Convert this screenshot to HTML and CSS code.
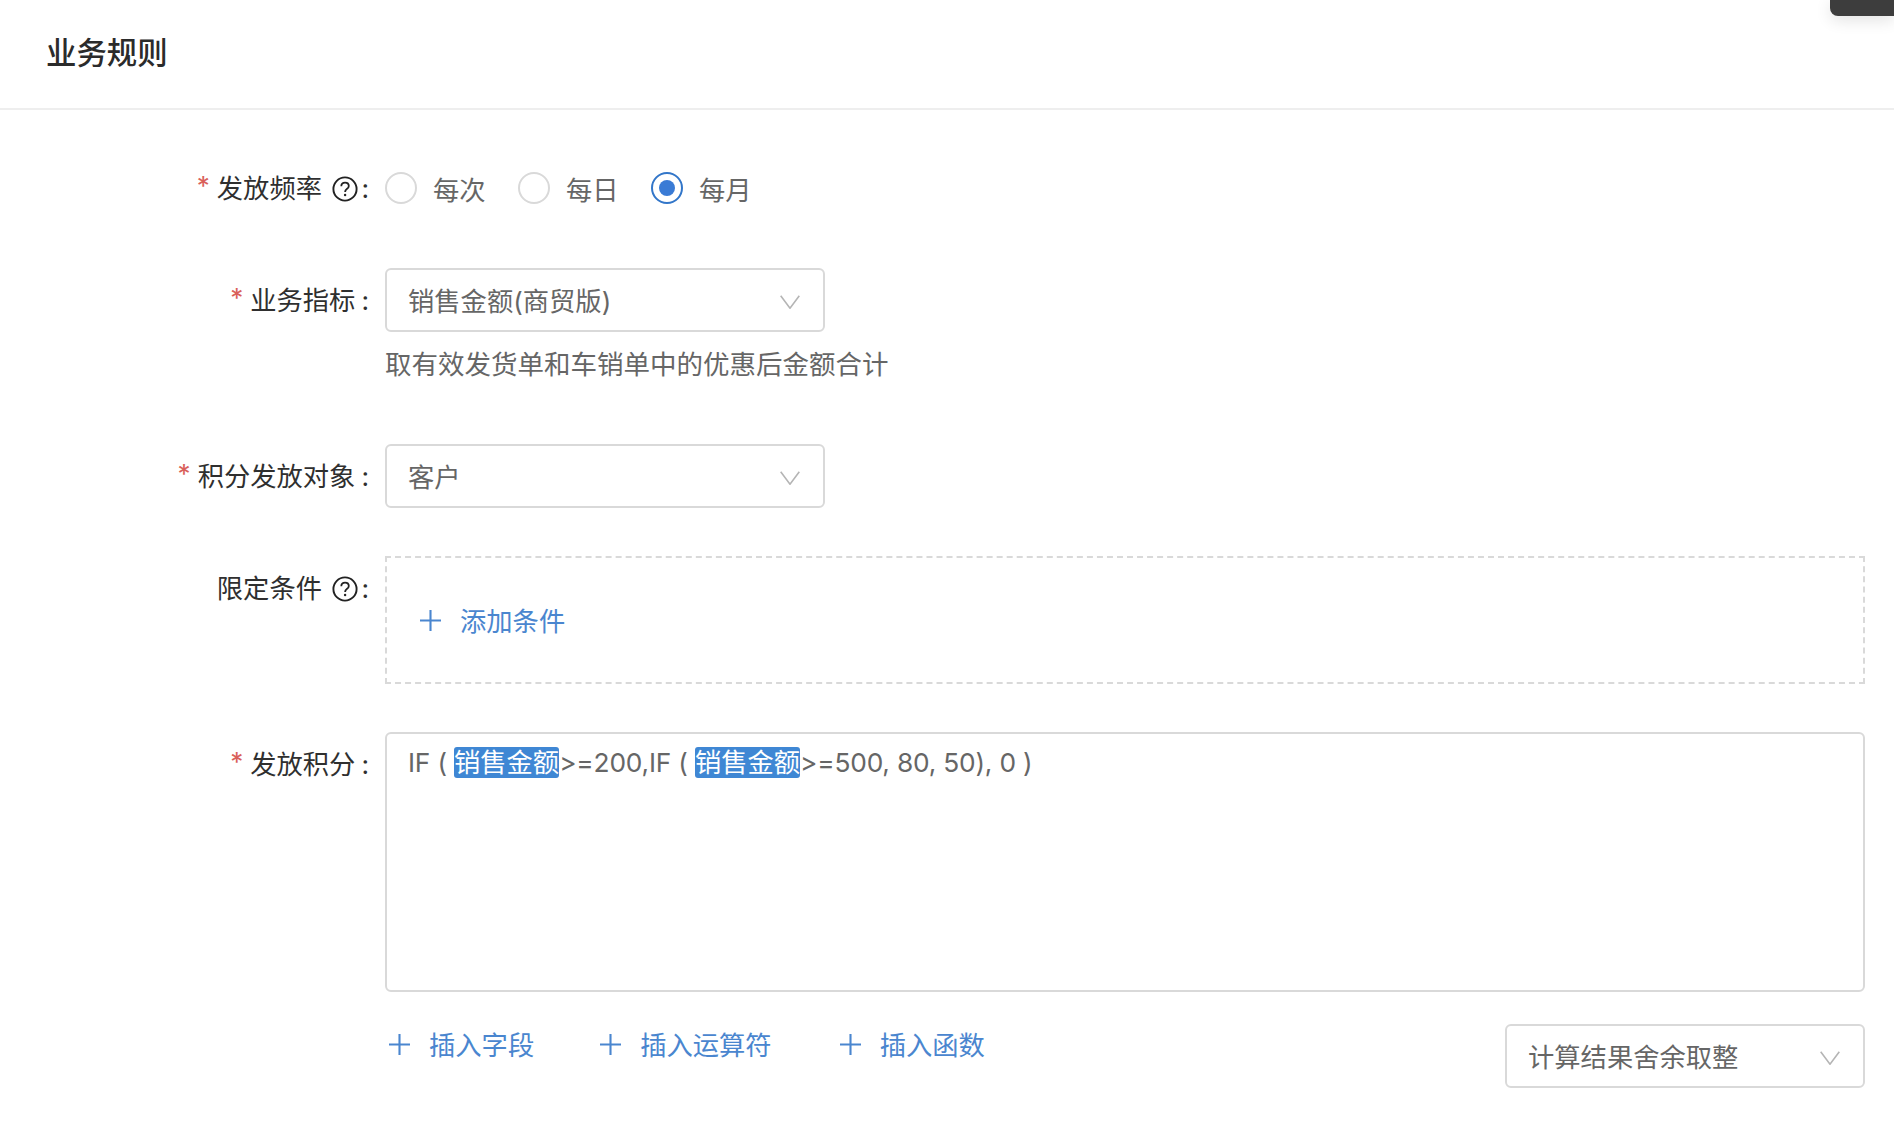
FILE: index.html
```html
<!DOCTYPE html>
<html lang="zh-CN">
<head>
<meta charset="utf-8">
<title>业务规则</title>
<link rel="stylesheet" href="styles.css">
</head>
<body>
<div class="corner-tab"></div>
<header class="section-head"><h1>业务规则</h1></header>
<main class="form">
  <div class="row row-freq">
    <div class="label"><span class="req">*</span>发放频率<svg class="help" viewBox="0 0 26 26"><circle cx="13" cy="13" r="11.6" fill="none" stroke="#222" stroke-width="1.9"/><path d="M9.3 10.3c0-2.3 1.6-3.7 3.8-3.7s3.7 1.4 3.7 3.4c0 1.5-.8 2.3-2 3.1-1.1.8-1.7 1.4-1.7 2.9" fill="none" stroke="#222" stroke-width="1.8"/><circle cx="13.1" cy="19" r="1.2" fill="#222"/></svg><span class="colon">:</span></div>
    <div class="radios">
      <span class="radio"><i class="dot"></i>每次</span>
      <span class="radio"><i class="dot"></i>每日</span>
      <span class="radio"><i class="dot on"></i>每月</span>
    </div>
  </div>
  <div class="row row-metric">
    <div class="label"><span class="req">*</span>业务指标<span class="colon">:</span></div>
    <div>
      <div class="select wide"><span>销售金额(商贸版)</span><svg class="chev" viewBox="0 0 20 14"><path d="M.7.7 10 13.2 19.3.7" fill="none" stroke="#b5b5b5" stroke-width="1.6"/></svg></div>
      <p class="hint">取有效发货单和车销单中的优惠后金额合计</p>
    </div>
  </div>
  <div class="row row-target">
    <div class="label"><span class="req">*</span>积分发放对象<span class="colon">:</span></div>
    <div class="select wide"><span>客户</span><svg class="chev" viewBox="0 0 20 14"><path d="M.7.7 10 13.2 19.3.7" fill="none" stroke="#b5b5b5" stroke-width="1.6"/></svg></div>
  </div>
  <div class="row row-cond">
    <div class="label">限定条件<svg class="help" viewBox="0 0 26 26"><circle cx="13" cy="13" r="11.6" fill="none" stroke="#222" stroke-width="1.9"/><path d="M9.3 10.3c0-2.3 1.6-3.7 3.8-3.7s3.7 1.4 3.7 3.4c0 1.5-.8 2.3-2 3.1-1.1.8-1.7 1.4-1.7 2.9" fill="none" stroke="#222" stroke-width="1.8"/><circle cx="13.1" cy="19" r="1.2" fill="#222"/></svg><span class="colon">:</span></div>
    <div class="cond-box">
      <span class="link"><svg class="plus" viewBox="0 0 22 22"><path d="M11 0v22M0 11h22" stroke="#4a86cf" stroke-width="2.2" fill="none"/></svg>添加条件</span>
    </div>
  </div>
  <div class="row row-formula">
    <div class="label"><span class="req">*</span>发放积分<span class="colon">:</span></div>
    <div class="formula-col">
      <div class="formula">IF ( <mark>销售金额</mark>&gt;=200,IF ( <mark>销售金额</mark>&gt;=500, 80, 50), 0 )</div>
      <div class="tools">
        <div class="links">
          <span class="link"><svg class="plus" viewBox="0 0 22 22"><path d="M11 0v22M0 11h22" stroke="#4a86cf" stroke-width="2.2" fill="none"/></svg>插入字段</span>
          <span class="link"><svg class="plus" viewBox="0 0 22 22"><path d="M11 0v22M0 11h22" stroke="#4a86cf" stroke-width="2.2" fill="none"/></svg>插入运算符</span>
          <span class="link"><svg class="plus" viewBox="0 0 22 22"><path d="M11 0v22M0 11h22" stroke="#4a86cf" stroke-width="2.2" fill="none"/></svg>插入函数</span>
        </div>
        <div class="select narrow"><span>计算结果舍余取整</span><svg class="chev" viewBox="0 0 20 14"><path d="M.7.7 10 13.2 19.3.7" fill="none" stroke="#b5b5b5" stroke-width="1.6"/></svg></div>
      </div>
    </div>
  </div>
</main>
</body>
</html>
```
FILE: styles.css
```css
* { box-sizing: border-box; }
html, body { margin: 0; padding: 0; }
body {
  width: 1894px;
  height: 1134px;
  overflow: hidden;
  background: #fff;
  color: #333;
  font-family: "Inter", "Noto Sans CJK SC", sans-serif;
  font-size: 26.3px;
  position: relative;
}
.corner-tab {
  position: absolute;
  top: 0;
  left: 1830px;
  width: 64px;
  height: 16px;
  background: #3d3d3d;
  border-bottom-left-radius: 8px;
  box-shadow: 0 4px 16px rgba(0, 0, 0, .12);
}
.section-head {
  height: 110px;
  padding-left: 46px;
  border-bottom: 2px solid #eee;
  display: flex;
  align-items: center;
}
.section-head h1 {
  margin: 0 0 6px;
  font-size: 30.4px;
  font-weight: 500;
  color: #2b2b2b;
}
.form { padding: 46px 29px 0 0; }
.row { display: flex; align-items: flex-start; }
.row-freq { height: 64px; margin-bottom: 48px; }
.row-metric { height: 176px; }
.row-target { height: 64px; margin-bottom: 48px; }
.row-cond { margin-bottom: 48px; }
.label {
  flex: 0 0 370px;
  height: 64px;
  line-height: 64px;
  padding-top: 2px;
  display: flex;
  align-items: center;
  justify-content: flex-end;
  color: #2f2f2f;
  white-space: nowrap;
}
.label .req {
  color: #d9605a;
  margin-right: 7px;
  font-size: 26px;
  position: relative;
  top: -3px;
}
.colon { width: 14.6px; text-align: right; padding-right: 1px; }
.help { width: 26px; height: 26px; margin-left: 10px; margin-right: -2.6px; }
.radios { display: flex; margin-left: 15px; height: 64px; align-items: center; }
.radio {
  display: flex;
  align-items: center;
  width: 133px;
  color: #666;
}
.dot {
  width: 32px;
  height: 32px;
  border-radius: 50%;
  border: 2px solid #d9d9d9;
  margin-right: 16px;
}
.dot.on { border-color: #3276c9; }
.dot.on::after {
  content: "";
  display: block;
  width: 16px;
  height: 16px;
  margin: 6px;
  border-radius: 50%;
  background: #3a7bd5;
}
.select {
  height: 64px;
  border: 2px solid #d9d9d9;
  border-radius: 6px;
  display: flex;
  align-items: center;
  justify-content: space-between;
  padding: 0 23px 0 21px;
  color: #666;
  background: #fff;
}
.select > span { padding-bottom: 2px; }
.select.wide { width: 440px; margin-left: 15px; }
.select.narrow { width: 360px; }
.chev { width: 20px; height: 14px; margin-top: 4px; }
.hint { margin: 7px 0 0 15px; line-height: 50px; height: 50px; font-size: 26.5px; color: #666; white-space: nowrap; }
.cond-box {
  flex: 1;
  margin-left: 15px;
  height: 128px;
  border: 2px dashed #d9d9d9;
  display: flex;
  align-items: center;
  padding-left: 33px;
}
.link { display: inline-flex; align-items: center; padding-bottom: 2px; color: #4a86cf; white-space: nowrap; }
.plus { width: 21px; height: 21px; margin: 2px 19px 0 0; }
.formula-col { flex: 1; margin-left: 15px; }
.formula {
  height: 260px;
  border: 2px solid #d9d9d9;
  border-radius: 6px;
  padding: 13px 21px;
  line-height: 32px;
  letter-spacing: -.2px;
  color: #666;
  white-space: pre-wrap;
}
mark {
  display: inline-block;
  height: 31px;
  line-height: 31px;
  letter-spacing: 0;
  background: #3f87d4;
  color: #fff;
  border-radius: 3px;
}
.tools { display: flex; justify-content: space-between; margin-top: 32px; }
.links { display: flex; gap: 68px; margin-left: 4px; height: 40px; align-items: center; }
.links .link:first-child { margin-right: -2px; }
```
